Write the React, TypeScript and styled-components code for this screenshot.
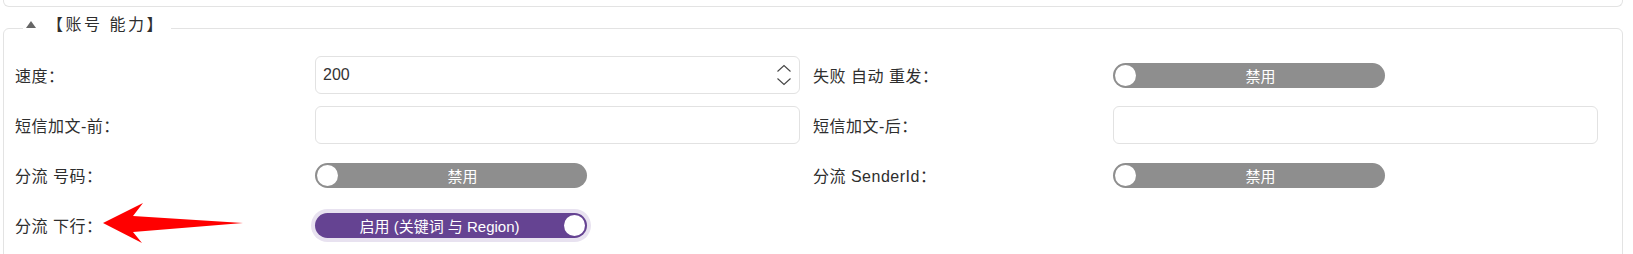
import React from "react";
import styled, { createGlobalStyle } from "styled-components";

const GlobalStyle = createGlobalStyle`
  html, body { margin: 0; padding: 0; background: #fff; }
  body {
    font-family: "Liberation Sans", "Noto Sans CJK SC", sans-serif;
    color: #333;
  }
`;

const Page = styled.div`
  position: relative;
  padding: 0 10px 0 3px;
`;

const TopCard = styled.div`
  height: 6px;
  border: 1px solid #e3e3e3;
  border-top: none;
  border-radius: 0 0 6px 6px;
`;

const Fieldset = styled.fieldset`
  margin: 8px 0 0;
  padding: 0 25px 12px 11px;
  min-width: 0;
  border: 1px solid #e3e3e3;
  border-radius: 6px;
`;

const Legend = styled.legend`
  margin-left: 8px;
  padding: 0 6px 7px 3px;
  font-size: 16px;
  line-height: 20px;
  letter-spacing: 2.5px;
  color: #2e2e2e;
`;

const Caret = styled.span`
  display: inline-block;
  width: 0;
  height: 0;
  border-left: 5.5px solid transparent;
  border-right: 5.5px solid transparent;
  border-bottom: 7px solid #666;
  margin-right: 11px;
  vertical-align: 2px;
`;

const Rows = styled.div`
  padding-top: 8px;
`;

const Row = styled.div`
  display: flex;
  gap: 13px;
`;

const Field = styled.div`
  display: grid;
  grid-template-columns: 300px 485px;
  align-items: center;
  height: 50px;
`;

const Label = styled.div`
  font-size: 16px;
  letter-spacing: 0.5px;
  color: #2e2e2e;
  white-space: pre;
`;

const TextBox = styled.div`
  box-sizing: border-box;
  height: 38px;
  border: 1px solid #e2e2e2;
  border-radius: 6px;
  padding: 0 7px 0 7px;
  display: flex;
  align-items: center;
`;

const ValueInput = styled.input`
  flex: 1;
  min-width: 0;
  border: none;
  outline: none;
  background: transparent;
  padding: 0;
  font-family: "Liberation Sans", sans-serif;
  font-size: 16px;
  color: #333;
`;

const Toggle = styled.div<{ $on: boolean }>`
  position: relative;
  box-sizing: border-box;
  width: 272px;
  height: 25px;
  border-radius: 13px;
  background: ${(p) => (p.$on ? "#654392" : "#8e8e8e")};
  box-shadow: ${(p) => (p.$on ? "0 0 0 4px #e8e2f0" : "none")};
  color: #fff;
  font-size: 15px;
  display: flex;
  align-items: center;
  justify-content: center;
  padding: ${(p) => (p.$on ? "0 23px 0 0" : "0 0 0 23px")};
`;

const Knob = styled.span<{ $on: boolean }>`
  position: absolute;
  top: 2px;
  ${(p) => (p.$on ? "right: 2px;" : "left: 2px;")}
  width: 21px;
  height: 21px;
  border-radius: 50%;
  background: #fff;
`;

const Arrow = styled.svg`
  position: absolute;
  left: 100px;
  top: 200px;
`;

const Spinner = () => (
  <svg width="16" height="22" viewBox="0 0 16 22" fill="none">
    <path d="M1.5 7.5 L8 1.5 L14.5 7.5" stroke="#444" strokeWidth="1.1" />
    <path d="M1.5 14.5 L8 20.5 L14.5 14.5" stroke="#444" strokeWidth="1.1" />
  </svg>
);

const Switch = ({ on, text }: { on: boolean; text: string }) => (
  <Toggle $on={on}>
    <Knob $on={on} />
    {text}
  </Toggle>
);

export default function App() {
  return (
    <>
      <GlobalStyle />
      <Page>
        <TopCard />
        <Fieldset>
          <Legend>
            <Caret />
            【账号 能力】
          </Legend>
          <Rows>
            <Row>
              <Field>
                <Label>速度：</Label>
                <TextBox>
                  <ValueInput readOnly value="200" />
                  <Spinner />
                </TextBox>
              </Field>
              <Field>
                <Label>失败 自动 重发：</Label>
                <div>
                  <Switch on={false} text="禁用" />
                </div>
              </Field>
            </Row>
            <Row>
              <Field>
                <Label>短信加文-前：</Label>
                <TextBox>
                  <ValueInput readOnly value="" />
                </TextBox>
              </Field>
              <Field>
                <Label>短信加文-后：</Label>
                <TextBox>
                  <ValueInput readOnly value="" />
                </TextBox>
              </Field>
            </Row>
            <Row>
              <Field>
                <Label>分流 号码：</Label>
                <div>
                  <Switch on={false} text="禁用" />
                </div>
              </Field>
              <Field>
                <Label>分流 SenderId：</Label>
                <div>
                  <Switch on={false} text="禁用" />
                </div>
              </Field>
            </Row>
            <Row>
              <Field>
                <Label>分流 下行：</Label>
                <div>
                  <Switch on={true} text="启用 (关键词 与 Region)" />
                </div>
              </Field>
            </Row>
          </Rows>
        </Fieldset>
        <Arrow width="150" height="50" viewBox="0 0 150 50">
          <path d="M3 23 L43 3 L33 16 L143 23 L33 32 L42 43 Z" fill="#ff0000" />
        </Arrow>
      </Page>
    </>
  );
}
